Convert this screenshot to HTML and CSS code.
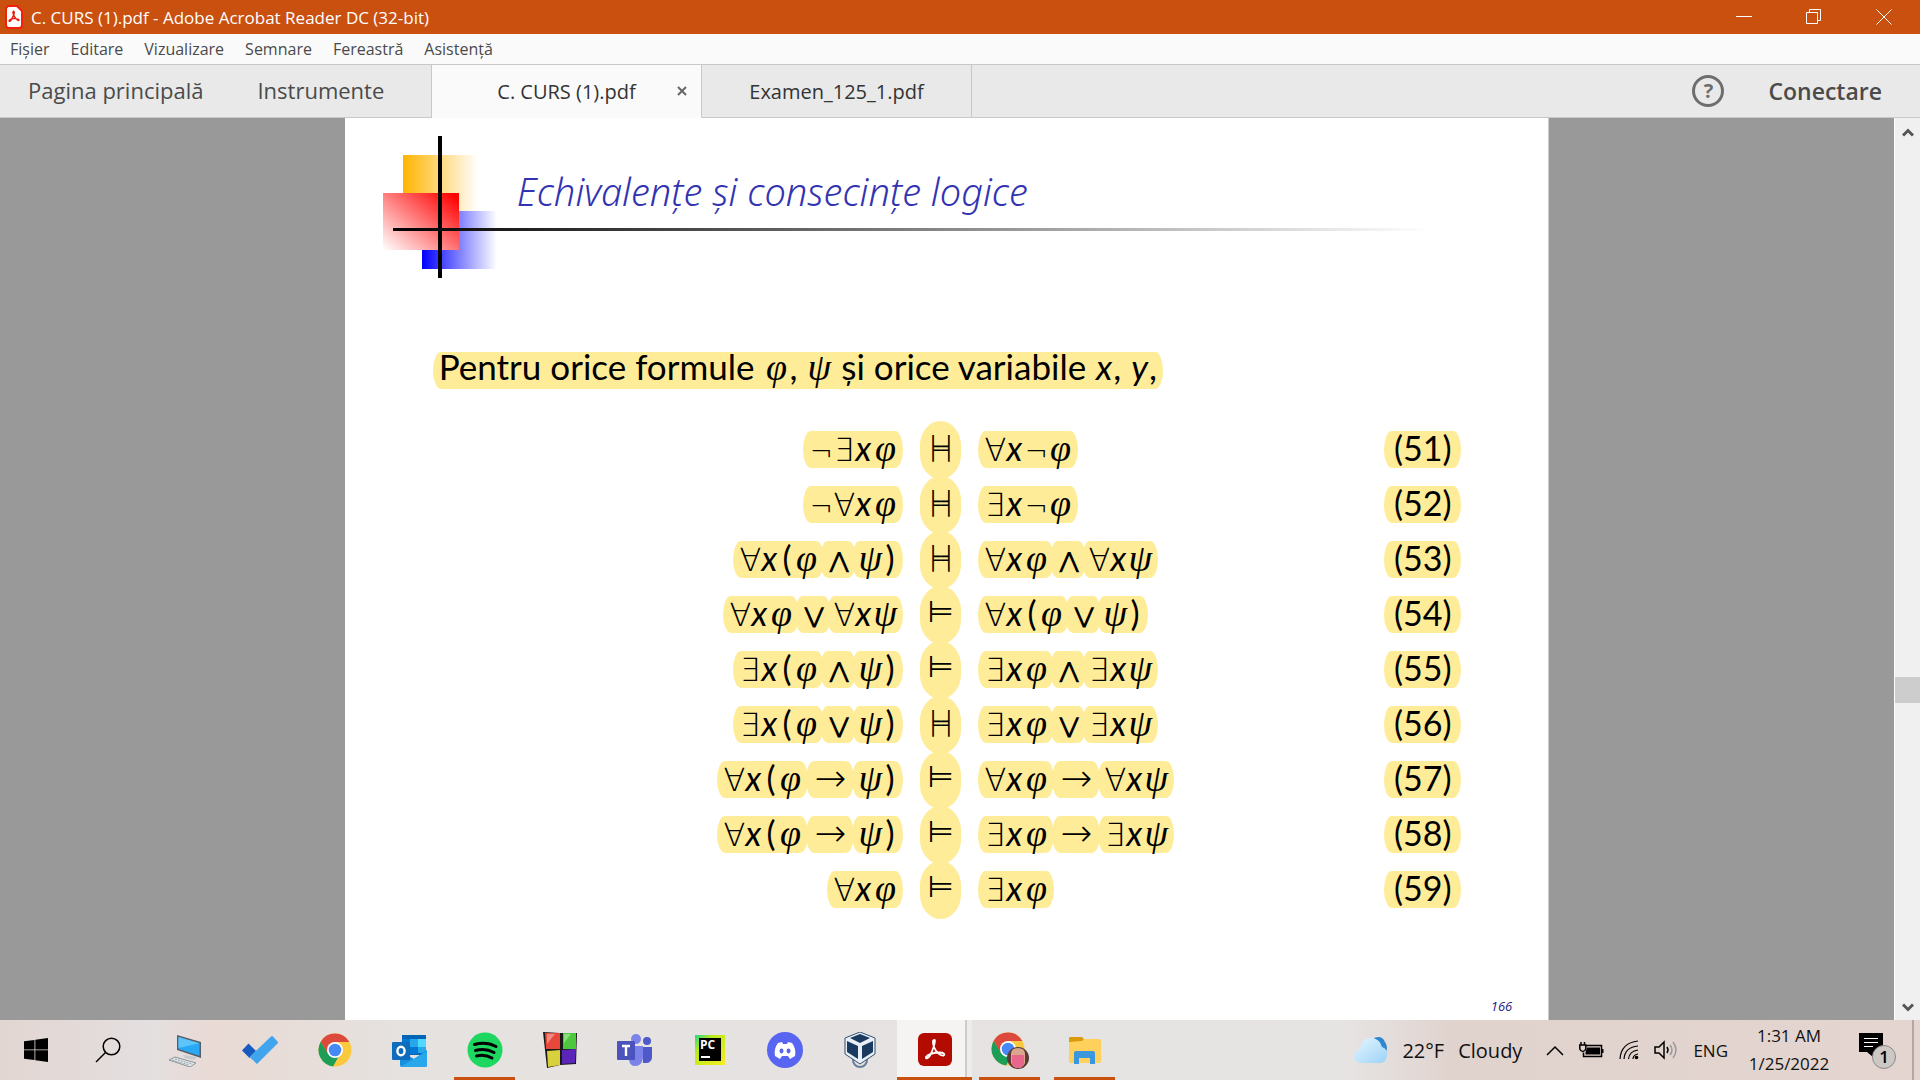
FILE: index.html
```html
<!DOCTYPE html>
<html lang="ro">
<head>
<meta charset="utf-8">
<title>C. CURS (1).pdf - Adobe Acrobat Reader DC (32-bit)</title>
<link rel="stylesheet" href="styles.css">
</head>
<body>
<header class="titlebar">
  <svg class="app-icon" width="18" height="24" viewBox="0 0 18 24"><path d="M3 1h9l5 5v14a3 3 0 0 1-3 3H4a3 3 0 0 1-3-3V3z" fill="#fff" stroke="#f5200c" stroke-width="2"/><path d="M4 16c1-3 9-3 10-1 0 2-5-2-6-7 0-3 2-2 1 1s-4 9-5 7z" fill="none" stroke="#e8190a" stroke-width="1.4"/></svg>
  <span class="window-title">C. CURS (1).pdf - Adobe Acrobat Reader DC (32-bit)</span>
  <div class="window-controls">
    <button aria-label="Minimize"><svg width="16" height="16" viewBox="0 0 16 16"><path d="M0 7.500h16"/></svg></button>
    <button aria-label="Restore"><svg width="16" height="16" viewBox="0 0 16 16"><path d="M.5 3.500h11v11H.5zM3.500 3.500v-3h11v11h-3"/></svg></button>
    <button aria-label="Close"><svg width="16" height="16" viewBox="0 0 16 16"><path d="M.5.5l15 15M15.500.5l-15 15"/></svg></button>
  </div>
</header>
<nav class="menubar">
  <button>Fişier</button><button>Editare</button><button>Vizualizare</button><button>Semnare</button><button>Fereastră</button><button>Asistenţă</button>
</nav>
<div class="tabbar">
  <div class="home-tabs"><button>Pagina principală</button><button>Instrumente</button></div>
  <div class="doc-tab active"><button class="doc-name">C. CURS (1).pdf</button><button class="close" aria-label="Close tab"><svg width="10" height="10" viewBox="0 0 10 10"><path d="M1 1l8 8M9 1l-8 8"/></svg></button></div>
  <div class="doc-tab"><button class="doc-name">Examen_125_1.pdf</button></div>
  <div class="account"><button class="help" aria-label="Help">?</button><button class="sign-in">Conectare</button></div>
</div>
<main class="viewer">
  <div class="canvas">
    <article class="slide">
      <header class="slide-head">
        <svg class="emblem" width="115" height="142" viewBox="0 0 115 142">
          <defs>
            <linearGradient id="gy"><stop offset="0" stop-color="#ffb400"/><stop offset="1" stop-color="#fff"/></linearGradient>
            <linearGradient id="gb"><stop offset="0" stop-color="#00f"/><stop offset="1" stop-color="#fff"/></linearGradient>
            <linearGradient id="gr" x1="1" y1="0.100" x2="0" y2="1"><stop offset="0" stop-color="#f00"/><stop offset="1" stop-color="#fff"/></linearGradient>
          </defs>
          <path d="M20 19h75v60H20z" fill="url(#gy)"/>
          <path d="M39 75h75v58H39z" fill="url(#gb)"/>
          <path d="M0 57h76v57H0z" fill="url(#gr)"/>
          <path d="M55 0h4v142h-4z"/>
        </svg>
        <h1>Echivalențe și consecințe logice</h1>
      </header>
      <section class="slide-body">
        <p class="intro"><span class="hl">Pentru orice formule <i class="gk">φ</i>, <i class="gk">ψ</i> și orice variabile <i>x</i>, <i>y</i>,</span></p>
        <div class="equations" id="equations"></div>
      </section>
      <footer class="page-no">166</footer>
    </article>
  </div>
  <div class="scrollbar">
    <button aria-label="Scroll up"><svg width="12" height="9" viewBox="0 0 12 9"><path d="M1 7.500l5-5 5 5"/></svg></button>
    <div class="track"><div class="thumb"></div></div>
    <button aria-label="Scroll down"><svg width="12" height="9" viewBox="0 0 12 9"><path d="M1 1.500l5 5 5-5"/></svg></button>
  </div>
</main>
<footer class="taskbar">
  <div class="apps">
    <button class="sys" aria-label="Start"><svg width="24" height="24" viewBox="0 0 24 24"><path d="M0 3.300l10.500-1.300v9.500H0zM11.300 1.800L24 0v11.500H11.300zM0 12.300h10.500V22L0 20.700zM11.300 12.300H24V24l-12.700-1.800z"/></svg></button>
    <button class="sys" aria-label="Search"><svg width="26" height="26" viewBox="0 0 26 26" fill="none" stroke="#000" stroke-width="1.500"><circle cx="16.500" cy="9.500" r="8.300"/><path d="M10.500 15.500L1 25"/></svg></button>
    <button aria-label="This PC"><svg width="34" height="34" viewBox="0 0 34 34"><path d="M9 2l24 7v16L9 17z" fill="#555e66"/><path d="M10.500 4l21 6.300v12.500L10.500 16z" fill="#29a9f5"/><path d="M10.500 4l21 6.300L10.500 15z" fill="#5cc4fb"/><path d="M15 22l8 1 6 1-3 3-9-2z" fill="#c5cdd2"/><path d="M1 27l6-3 21 6-6 4z" fill="#e2e6e8" stroke="#8b9499"/><path d="M4 27l17 5M7 26l17 5" stroke="#9aa3a8" stroke-dasharray="2 1"/></svg></button>
    <button aria-label="To Do"><svg width="36" height="30" viewBox="0 0 36 30"><path d="M6.500 8.500L14 16l-6.500 7L0 15.500z" fill="#185abd"/><path d="M29 1.500q1-1 2 0l4.500 5q1 1 0 2L15 29 7.500 22z" fill="#41a5ee"/></svg></button>
    <button aria-label="Chrome"><svg width="34" height="34" viewBox="0 0 34 34"><use href="#chrome-mark"/></svg></button>
    <button aria-label="Outlook"><svg width="36" height="33" viewBox="0 0 36 33"><path d="M10 1h24v20H10z" fill="#0364b8"/><path d="M10 5h8v8h-8z" fill="#0078d4"/><path d="M18 5h8v8h-8z" fill="#28a8ea"/><path d="M26 5h8v8h-8z" fill="#50d9ff"/><path d="M18 13h8v7h-8z" fill="#0078d4"/><path d="M26 13h8v6h-8z" fill="#28a8ea"/><path d="M8 17l14 8 13-9v15q0 2-2 2H10q-2 0-2-2z" fill="#1490df"/><path d="M8 33l27-16v14q0 2-2 2z" fill="#28a8ea"/><rect y="8" width="18" height="18" rx="1" fill="#0f6cbd"/><ellipse cx="9" cy="17" rx="3.600" ry="4.300" fill="none" stroke="#fff" stroke-width="2.400"/></svg></button>
    <button class="running" aria-label="Spotify"><svg width="36" height="36" viewBox="0 0 36 36"><circle cx="18" cy="18" r="17.500" fill="#1ed760"/><path d="M7.500 12.500c7-2 15-1.500 21.500 2M8.500 18.500c6-1.700 13-1 18.500 2M9.500 24c5-1.300 10.500-.8 15.500 2" fill="none" stroke="#000" stroke-width="3" stroke-linecap="round"/></svg></button>
    <button aria-label="Cubes"><svg width="34" height="36" viewBox="0 0 34 36"><path d="M0 0l17 1 17 0-1 31-16 1-13 3z" fill="#181818"/><path d="M2 1h15v16H3z" fill="#e8473c"/><path d="M20 1h13v16H20z" fill="#4dc83c"/><path d="M4 19l13-1v15L5 35z" fill="#d9d13b"/><path d="M19 18l14-1-1 14-13 1z" fill="#5a25b8"/><path d="M4 2h8L4 12z" fill="#f08a80"/><path d="M21 2h7l-7 9z" fill="#8ade7c"/></svg></button>
    <button aria-label="Teams"><svg width="36" height="34" viewBox="0 0 36 34"><circle cx="19" cy="6" r="5" fill="#7b83eb"/><circle cx="30" cy="8" r="4" fill="#5059c9"/><path d="M26 14h9v11q-1 5-6 5h-3z" fill="#5059c9"/><path d="M12 13h14v12q-1 8-8 8-5 0-6-6z" fill="#7b83eb"/><rect y="8" width="18" height="19" rx="1" fill="#4b53bc"/><path d="M5 13h8M9 13v10" stroke="#fff" stroke-width="2.400"/></svg></button>
    <button aria-label="PyCharm"><svg width="30" height="36" viewBox="0 0 30 36"><defs><linearGradient id="pc" x2="1" y2="1"><stop offset="0" stop-color="#21d789"/><stop offset=".3" stop-color="#b8ea1d"/><stop offset="1" stop-color="#f5ee22"/></linearGradient></defs><path d="M0 3h30v30H0z" fill="url(#pc)"/><path d="M4 6h22v23H4z"/><text x="5" y="17" class="pc-text">PC</text><path d="M6 24h9v2H6z" fill="#fff"/></svg></button>
    <button aria-label="Discord"><svg width="36" height="36" viewBox="0 0 36 36"><circle cx="18" cy="18" r="18" fill="#5865f2"/><path d="M8 24c-1-5 0-9 3-13l4-1 1 2h4l1-2 4 1c3 4 4 8 3 13l-5 3-2-3h-6l-2 3z" fill="#fff"/><ellipse cx="14.500" cy="19" rx="2" ry="2.400" fill="#5865f2"/><ellipse cx="21.500" cy="19" rx="2" ry="2.400" fill="#5865f2"/></svg></button>
    <button aria-label="VirtualBox"><svg width="32" height="36" viewBox="0 0 32 36"><circle cx="16" cy="28" r="7" fill="none" stroke="#6a7f9b" stroke-width="2"/><path d="M16 0l15 6v16L16 32 1 22V6z" fill="#e8eff7" stroke="#33506f"/><path d="M16 2l10 4-10 5L6 6z" fill="#1a3a5f"/><path d="M3 9l11 5v13L3 20zM29 9l-11 5v13l11-7z" fill="#1a3a5f"/></svg></button>
    <button class="running current" aria-label="Acrobat Reader"><svg width="34" height="34" viewBox="0 0 34 34"><rect width="34" height="33" rx="6" fill="#b30b00"/><path d="M16.500 7c-2 0-2 3-.5 7 2 5 6 9 9.500 8.500 2-.8.500-3-4-3-6 0-12 2-13.500 4.500-.8 2 2 2 4-1.500 3-5 6-15.500 4.500-15.500z" fill="none" stroke="#fff" stroke-width="1.800"/></svg></button>
    <button class="running" aria-label="Chrome profile"><svg width="38" height="40" viewBox="0 0 38 40"><use href="#chrome-mark" y="2"/><circle cx="27" cy="28" r="11" fill="#5b3a35"/><path d="M20 24q0-6 7-6t7 6v9q-2 5-7 5t-7-5z" fill="#d9a78f"/><path d="M21 25h12v9q-2 4-6 4t-6-4z" fill="#e8668c"/></svg></button>
    <button class="running" aria-label="File Explorer"><svg width="32" height="34" viewBox="0 0 32 34"><path d="M0 5q0-1 1-1h12l2 2-2 3H0z" fill="#d99a0b"/><path d="M0 9l13-1 2-2h15q2 0 2 2v20q0 2-2 2H2q-2 0-2-2z" fill="#ffd15c"/><path d="M5 31V20q0-2 2-2h17q2 0 2 2v11h-5v-6H10v6z" fill="#3a96dd"/></svg></button>
  </div>
  <div class="tray">
    <button class="weather"><svg width="34" height="28" viewBox="0 0 34 28"><defs><linearGradient id="cl" x2="1" y2="1"><stop offset="0" stop-color="#e6f6ff"/><stop offset="1" stop-color="#9cd3f7"/></linearGradient></defs><path d="M20 2q8-3 11 4 4 6 0 12z" fill="#2f87d0"/><path d="M8 27q-7 0-8-6 0-7 6-8 2-12 12-11 8 1 10 9 6 2 5 9-1 7-7 7z" fill="url(#cl)"/></svg><span>22°F</span><span>Cloudy</span></button>
    <button aria-label="Hidden icons"><svg width="18" height="11" viewBox="0 0 18 11"><path d="M1 10l8-8 8 8" class="line"/></svg></button>
    <button aria-label="Battery"><svg width="25" height="19" viewBox="0 0 25 19"><path d="M7 4.500h15.500v11H4.500v-4" class="line"/><path d="M8 6.500h13v7H6.500v-2zM23 8h1.500v4H23z"/><path d="M.8 4h6v4q-1 2.500-3 2.500T.8 8zM2 1v3M5.500 1v3" class="line"/></svg></button>
    <button aria-label="Network"><svg width="20" height="20" viewBox="0 0 20 20"><path d="M1 19Q2 3 19 1M5 19q1-12 14-13M9.500 19q1-8 9.500-9M14 19q0-4 5-5" class="line thin"/><circle cx="17.500" cy="17.500" r="1.800"/></svg></button>
    <button aria-label="Volume"><svg width="24" height="20" viewBox="0 0 24 20"><path d="M1 7h4l5-5v16l-5-5H1z" class="line"/><path d="M13 7q2 3 0 6" class="line"/><path d="M16 5q4 5 0 10M19 2q6 8 0 16" class="line faint"/></svg></button>
    <button class="lang">ENG</button>
    <button class="clock"><span>1:31 AM</span><span>1/25/2022</span></button>
    <button class="notes" aria-label="Notifications"><svg width="38" height="38" viewBox="0 0 38 38"><path d="M0 2h24v19H14v5l-6-5H0z"/><path d="M5 7.500h14M5 11.500h14M5 15.500h9" stroke="#fff"/><circle cx="25" cy="26" r="11.500" fill="#ccc8c6" stroke="#888"/><text x="25" y="32" text-anchor="middle" class="count">1</text></svg></button>
    <button class="desktop" aria-label="Show desktop"></button>
  </div>
</footer>
<svg width="0" height="0" class="defs"><defs><g id="chrome-mark"><circle cx="17" cy="17" r="16.500" fill="#fbc93d"/><path d="M2.700 8.700A16.500 16.500 0 0 1 31.300 9H17l-7 12.500z" fill="#dc4a3d"/><path d="M2.700 8.700A16.500 16.500 0 0 0 15 33.400L22 21H10z" fill="#1c9d58"/><circle cx="17" cy="17" r="8" fill="#fff"/><circle cx="17" cy="17" r="6.300" fill="#4688f4"/></g></defs></svg>
<script src="equations.js"></script>
</body>
</html>
```
FILE: styles.css
```css
* { box-sizing: border-box; }
body { margin: 0; height: 100vh; display: flex; flex-direction: column; overflow: hidden; font-family: "Open Sans", "Noto Sans", sans-serif; }
button { border: 0; padding: 0; background: none; font: inherit; color: inherit; }
svg { display: block; }
.defs { position: absolute; }

.titlebar { flex: none; height: 34px; background: #ca500f; color: #fff; display: flex; align-items: center; padding-left: 5px; }
.window-title { margin-left: 8px; font-size: 17px; }
.window-controls { margin-left: auto; display: flex; gap: 54px; padding-right: 28px; }
.window-controls svg { fill: none; stroke: #fff; }

.menubar { flex: none; height: 30px; background: #fafafa; color: #4a4a4a; font-size: 16px; display: flex; align-items: center; gap: 21px; padding-left: 10px; }
.tabbar { flex: none; height: 54px; background: #e9e9e9; border-top: 1px solid #c8c8c8; color: #4b4b4b; display: flex; }
.home-tabs { display: flex; gap: 54px; width: 432px; padding: 0 0 2px 28px; font-size: 22px; border-right: 1px solid #c8c8c8; border-bottom: 1px solid #c8c8c8; }
.doc-tab { width: 270px; display: flex; align-items: center; justify-content: center; position: relative; font-size: 20px; color: #333; border-right: 1px solid #c8c8c8; border-bottom: 1px solid #c8c8c8; }
.doc-tab.active { background: #fafafa; border-bottom-color: #fafafa; }
.close { position: absolute; right: 14px; }
.close svg { fill: none; stroke: #666; stroke-width: 2; }
.account { flex: 1; display: flex; align-items: center; justify-content: flex-end; gap: 44px; padding-right: 38px; border-bottom: 1px solid #c8c8c8; }
.help { width: 32px; height: 32px; border: 3px solid #6e6e6e; border-radius: 50%; font-size: 20px; line-height: 26px; font-weight: 700; color: #6e6e6e; }
.sign-in { font-size: 23px; font-weight: 600; }

.viewer { flex: 1; min-height: 0; display: flex; background: #999; }
.canvas { flex: 1; display: flex; justify-content: center; }
.scrollbar { width: 26px; background: #f0f0f0; border-left: 1px solid #fff; display: flex; flex-direction: column; align-items: center; padding: 10px 0 8px; }
.scrollbar svg { fill: none; stroke: #555; stroke-width: 3; }
.track { flex: 1; width: 100%; padding-top: 540px; }
.thumb { height: 26px; background: #cdcdcd; }

.slide { width: 63.6%; background: #fff; border-right: 1px solid #ccc; color: #000; font-family: Lato, "Open Sans", sans-serif; display: flex; flex-direction: column; padding-top: 18px; }
.slide-head { position: relative; display: flex; gap: 19px; padding-left: 38px; }
.slide-head::after { content: ""; position: absolute; left: 48px; right: 118px; top: 92px; height: 3px; background: linear-gradient(90deg, #000, #fff); }
h1 { margin: 31px 0 0; font-family: "Noto Sans", sans-serif; font-size: 38px; line-height: 48px; font-weight: 300; font-style: italic; color: #3333b2; }
.slide-body { padding: 74px 87px 0 88px; }
.intro { margin: 0; font-size: 35px; line-height: 37px; height: 37px; white-space: nowrap; }
.hl { display: block; height: 37px; line-height: 33px; padding: 0 6px; background: #ffec98; border-radius: 8px / 50%; white-space: nowrap; }
.intro .hl { width: fit-content; line-height: 28px; }
.intro i { display: inline-block; margin: 0 1px; text-align: center; }
.intro .gk { width: 24px; font-family: "Liberation Serif", serif; font-size: 38px; }
.equations { margin-top: 33px; display: grid; grid-template-columns: 46fr 41px 38fr 77px; grid-auto-rows: 55px; column-gap: 17px; align-items: center; font-size: 34px; }
.lhs { justify-self: end; }
.lhs, .rhs { display: flex; }
.mid { margin: 0 -4px; }
.mid.wide { margin: 0 -2px; }
.rel { height: 58px; margin: -1px 0; line-height: 51px; text-align: center; background: #ffec98; border-radius: 50% / 42%; font-family: "DejaVu Sans", sans-serif; font-size: 30px; }
.rel.both { font-family: "Noto Sans", sans-serif; font-size: 22px; }
.num { text-align: center; }
.s { display: inline-block; text-align: center; }
.op { width: 24px; font-family: "DejaVu Math TeX Gyre", "DejaVu Sans", sans-serif; font-size: 32px; }
.ng, .qt, .ar { font-family: "DejaVu Sans", sans-serif; font-weight: 200; }
.ng { width: 24px; font-size: 28px; }
.qt { width: 20px; font-size: 32px; }
.ar { width: 36px; font-size: 38px; }
.vr { width: 20px; font-style: italic; }
.gr { width: 24px; font-family: "Liberation Serif", serif; font-style: italic; font-size: 38px; }
.pr { width: 15px; }
.page-no { margin: auto 36px 6px auto; font-size: 13px; line-height: 16px; font-style: italic; font-family: "Open Sans", sans-serif; color: #22228a; }

.taskbar { flex: none; height: 60px; display: flex; justify-content: space-between; background: linear-gradient(90deg, #e2d6d1 0, #e4dfe0 8%, #e9dad5 11%, #e8dbd6 13%, #e5e2e0 21%, #e6e4e3 70%, #e0d2cd 76%, #e4d5d0 100%); }
.apps, .tray { display: flex; }
.apps button { width: 75px; display: flex; align-items: center; justify-content: center; position: relative; }
.apps .sys { width: 72px; }
.apps .sys + button:not(.sys) { margin-left: 3px; }
.running::after { content: ""; position: absolute; left: 7px; right: 7px; bottom: 0; height: 3px; background: #ca500f; }
.current { background: linear-gradient(90deg, #f5f4f3 68px, #cfcdcc 68px, #cfcdcc 70px, #eeecea 70px); }
.apps .current::after { left: 0; right: 0; }
.pc-text { font: 700 12px "Open Sans", sans-serif; fill: #fff; }
.tray { align-items: center; color: #111; }
.line { fill: none; stroke: #000; stroke-width: 1.5; }
.thin { stroke-width: 1.2; }
.faint { stroke: #999; }
.weather { display: flex; align-items: center; gap: 14px; font-size: 20px; margin-right: 24px; }
.tray > button { flex: none; }
.tray > button + button { margin-right: 15px; }
.lang { font-size: 17px; }
.tray > .clock { width: 92px; margin-right: 24px; display: flex; flex-direction: column; align-items: center; font-size: 17px; line-height: 28px; }
.count { font: 600 17px "Open Sans", sans-serif; }
.tray > .desktop { width: 8px; height: 60px; margin: 0; border-left: 2px solid #b3a7a3; }
```
FILE: equations.js
```js
// One entry per row: left side, relation, right side. "|" splits the highlighted groups.
const rows = [
  ["¬∃xφ", "╞╡", "∀x¬φ"],
  ["¬∀xφ", "╞╡", "∃x¬φ"],
  ["∀x(φ|∧|ψ)", "╞╡", "∀xφ|∧|∀xψ"],
  ["∀xφ|∨|∀xψ", "⊨", "∀x(φ|∨|ψ)"],
  ["∃x(φ|∧|ψ)", "⊨", "∃xφ|∧|∃xψ"],
  ["∃x(φ|∨|ψ)", "╞╡", "∃xφ|∨|∃xψ"],
  ["∀x(φ|→|ψ)", "⊨", "∀xφ|→|∀xψ"],
  ["∀x(φ|→|ψ)", "⊨", "∃xφ|→|∃xψ"],
  ["∀xφ", "⊨", "∃xφ"]
];
const kind = { "¬": "ng", "∧": "op", "∨": "op", "∀": "qt", "∃": "qt", "→": "ar", x: "vr", "φ": "gr", "ψ": "gr", "(": "pr", ")": "pr" };
const side = text => text.split("|").map(group => {
  const mid = group === "→" ? " mid wide" : group.length === 1 ? " mid" : "";
  return `<span class="hl${mid}">` + [...group].map(c => `<span class="s ${kind[c]}">${c}</span>`).join("") + "</span>";
}).join("");
document.getElementById("equations").innerHTML = rows.map(([l, rel, r], i) =>
  `<div class="lhs">${side(l)}</div><div class="rel${rel.length > 1 ? " both" : ""}">${rel}</div><div class="rhs">${side(r)}</div><div class="hl num">(${51 + i})</div>`).join("");
```
